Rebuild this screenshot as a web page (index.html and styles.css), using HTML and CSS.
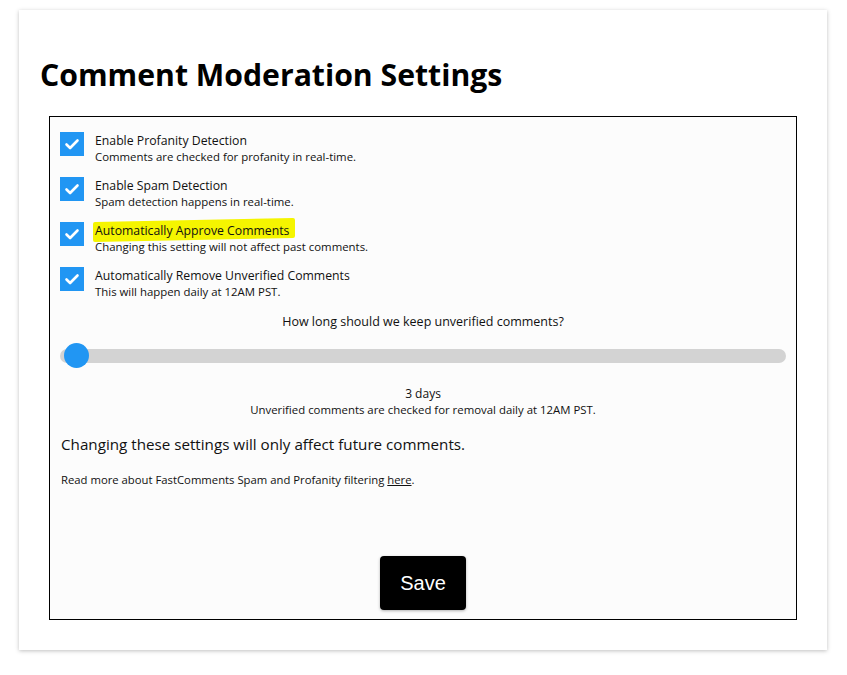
FILE: index.html
```html
<!DOCTYPE html>
<html>
<head>
<meta charset="utf-8">
<link rel="stylesheet" href="styles.css">
</head>
<body>
<div class="card">
  <h1 class="title">Comment Moderation Settings</h1>
  <div class="panel">
    <div class="option">
      <span class="check"><svg viewBox="0 0 24 24" width="24" height="24"><path d="M6.5 12.5l3.6 3.5 7.4-7.5" fill="none" stroke="#fff" stroke-width="2.6" stroke-linecap="round" stroke-linejoin="round"/></svg></span>
      <div class="option-text">
        <div class="option-title">Enable Profanity Detection</div>
        <div class="option-desc">Comments are checked for profanity in real-time.</div>
      </div>
    </div>
    <div class="option">
      <span class="check"><svg viewBox="0 0 24 24" width="24" height="24"><path d="M6.5 12.5l3.6 3.5 7.4-7.5" fill="none" stroke="#fff" stroke-width="2.6" stroke-linecap="round" stroke-linejoin="round"/></svg></span>
      <div class="option-text">
        <div class="option-title">Enable Spam Detection</div>
        <div class="option-desc">Spam detection happens in real-time.</div>
      </div>
    </div>
    <div class="option">
      <span class="check"><svg viewBox="0 0 24 24" width="24" height="24"><path d="M6.5 12.5l3.6 3.5 7.4-7.5" fill="none" stroke="#fff" stroke-width="2.6" stroke-linecap="round" stroke-linejoin="round"/></svg></span>
      <div class="option-text">
        <div class="option-title"><span class="highlight">Automatically Approve Comments</span></div>
        <div class="option-desc">Changing this setting will not affect past comments.</div>
      </div>
    </div>
    <div class="option">
      <span class="check"><svg viewBox="0 0 24 24" width="24" height="24"><path d="M6.5 12.5l3.6 3.5 7.4-7.5" fill="none" stroke="#fff" stroke-width="2.6" stroke-linecap="round" stroke-linejoin="round"/></svg></span>
      <div class="option-text">
        <div class="option-title">Automatically Remove Unverified Comments</div>
        <div class="option-desc">This will happen daily at 12AM PST.</div>
      </div>
    </div>
    <div class="slider-label">How long should we keep unverified comments?</div>
    <div class="slider">
      <div class="track"></div>
      <div class="thumb"></div>
    </div>
    <div class="slider-value">3 days</div>
    <div class="slider-note">Unverified comments are checked for removal daily at 12AM PST.</div>
    <p class="notice">Changing these settings will only affect future comments.</p>
    <p class="more">Read more about FastComments Spam and Profanity filtering <a href="#">here</a>.</p>
    <div class="actions"><button class="save">Save</button></div>
  </div>
</div>
</body>
</html>
```
FILE: styles.css
```css
html, body {
  margin: 0;
  padding: 0;
  background: #fff;
}
body {
  font-family: "Open Sans", "Noto Sans", sans-serif;
  color: #000;
  padding-top: 10px;
  padding-bottom: 20px;
}
.card {
  margin: 0 0 0 19px;
  width: 808px;
  height: 640px;
  box-sizing: border-box;
  padding: 45px 30px 0;
  background: #fff;
  box-shadow: 0 1px 4px rgba(0,0,0,0.25);
}
.title {
  margin: 0 0 0 -9px;
  font-size: 30.2px;
  font-weight: 700;
  line-height: 40px;
  letter-spacing: 0;
}
.panel {
  margin-top: 21px;
  height: 504px;
  box-sizing: border-box;
  border: 1px solid #000;
  background: #fcfcfc;
  padding: 15px 10px 0;
  display: flex;
  flex-direction: column;
}
.option {
  display: flex;
  align-items: flex-start;
  gap: 11px;
  height: 45px;
}
.check {
  width: 24px;
  height: 24px;
  background: #2196f3;
  flex: none;
  display: block;
}
.check svg { display: block; }
.option-text {
  padding-top: 1px;
}
.option-title {
  font-size: 12.25px;
  line-height: 16px;
  color: #111;
}
.option-desc {
  font-size: 11.4px;
  line-height: 15px;
  color: #111;
}
.highlight {
  position: relative;
  z-index: 0;
}
.highlight::before {
  content: "";
  position: absolute;
  z-index: -1;
  left: -2px;
  right: -6px;
  top: -2px;
  bottom: -1px;
  background: #f5f500;
  transform: skewY(-1.2deg);
  border-radius: 2px;
}
.slider-label {
  margin-top: 2px;
  text-align: center;
  font-size: 12.5px;
  line-height: 16px;
  color: #111;
}
.slider {
  position: relative;
  height: 25px;
  margin-top: 13px;
}
.track {
  position: absolute;
  left: 0;
  right: 0;
  top: 6px;
  height: 14px;
  border-radius: 7px;
  background: #d3d3d3;
}
.thumb {
  position: absolute;
  left: 4px;
  top: 0;
  width: 25px;
  height: 25px;
  border-radius: 50%;
  background: #2196f3;
}
.slider-value {
  margin-top: 18px;
  text-align: center;
  font-size: 12px;
  line-height: 16px;
  color: #111;
}
.slider-note {
  text-align: center;
  font-size: 11.4px;
  line-height: 15px;
  color: #111;
}
.notice {
  margin: 17px 0 0 1px;
  font-size: 15.2px;
  line-height: 20px;
  color: #111;
}
.more {
  margin: 18px 0 0 1px;
  font-size: 11.3px;
  line-height: 15px;
  color: #111;
}
.more a { color: #111; }
.actions {
  margin-top: auto;
  margin-bottom: 9px;
  display: flex;
  justify-content: center;
}
.save {
  width: 86px;
  height: 54px;
  border: none;
  border-radius: 4px;
  background: #000;
  color: #fff;
  font-family: "Liberation Sans", Arial, sans-serif;
  font-size: 20px;
  box-shadow: 0 1px 3px rgba(0,0,0,0.3);
  cursor: pointer;
}
```
